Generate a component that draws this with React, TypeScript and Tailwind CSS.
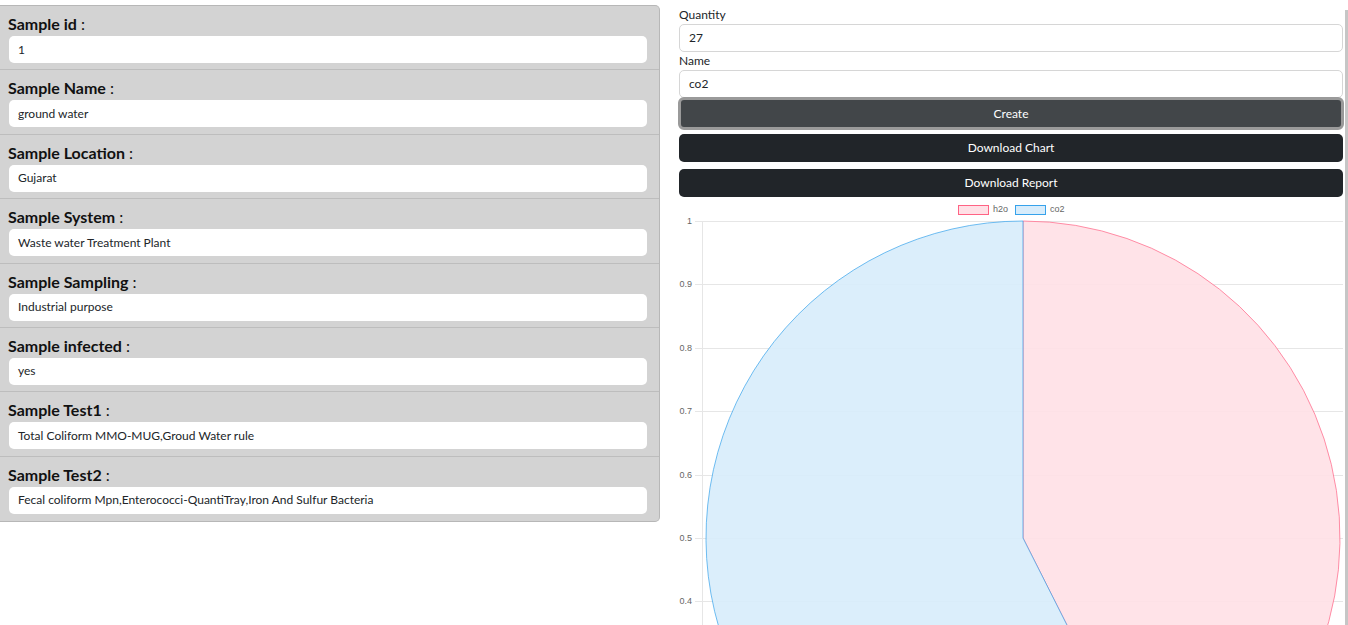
import React from "react";

const fields = [
  { label: "Sample id", value: "1" },
  { label: "Sample Name", value: "ground water" },
  { label: "Sample Location", value: "Gujarat" },
  { label: "Sample System", value: "Waste water Treatment Plant" },
  { label: "Sample Sampling", value: "Industrial purpose" },
  { label: "Sample infected", value: "yes" },
  { label: "Sample Test1", value: "Total Coliform MMO-MUG,Groud Water rule" },
  {
    label: "Sample Test2",
    value: "Fecal coliform Mpn,Enterococci-QuantiTray,Iron And Sulfur Bacteria",
  },
];

const data = [
  { name: "h2o", value: 20, fill: "#ffe0e6", stroke: "#ff6384" },
  { name: "co2", value: 27, fill: "#d7ecfb", stroke: "#36a2eb" },
];

function PieChart() {
  const cx = 344;
  const cy = 338;
  const r = 317;
  const total = data.reduce((s, d) => s + d.value, 0);
  const top = 21;
  const step = 63.4;
  // only the ticks that fit in the visible part of the chart
  const ticks = ["1", "0.9", "0.8", "0.7", "0.6", "0.5", "0.4"];

  let start = -Math.PI / 2;
  const slices = data.map((d) => {
    const sweep = (d.value / total) * Math.PI * 2;
    const end = start + sweep;
    const x1 = cx + r * Math.cos(start);
    const y1 = cy + r * Math.sin(start);
    const x2 = cx + r * Math.cos(end);
    const y2 = cy + r * Math.sin(end);
    const large = sweep > Math.PI ? 1 : 0;
    const path = `M${cx},${cy} L${x1},${y1} A${r},${r} 0 ${large} 1 ${x2},${y2} Z`;
    start = end;
    return { ...d, path };
  });

  return (
    <svg width="664" height="440" className="block" style={{ fontFamily: "'Liberation Sans', Arial, sans-serif" }}>
      {/* legend */}
      <rect x="279.5" y="5.5" width="30" height="9" fill="#ffe0e6" stroke="#ff6384" strokeWidth="1" />
      <text x="314" y="10" fontSize="9" fill="#666" dominantBaseline="middle">h2o</text>
      <rect x="336.5" y="5.5" width="30" height="9" fill="#d7ecfb" stroke="#36a2eb" strokeWidth="1" />
      <text x="371" y="10" fontSize="9" fill="#666" dominantBaseline="middle">co2</text>

      {/* grid */}
      {ticks.map((t, i) => {
        const y = Math.round(top + i * step) + 0.5;
        return (
          <g key={t}>
            <line x1="16" x2="664" y1={y} y2={y} stroke="#e6e6e6" strokeWidth="1" />
            <text x="13" y={y} fontSize="9" fill="#666" textAnchor="end" dominantBaseline="middle">
              {t}
            </text>
          </g>
        );
      })}
      <line x1="23.5" x2="23.5" y1={top} y2="440" stroke="#e6e6e6" strokeWidth="1" />

      {/* slices */}
      {slices.map((s) => (
        <path key={s.name} d={s.path} fill={s.fill} fillOpacity="0.9" stroke={s.stroke} strokeOpacity="0.7" strokeWidth="1" />
      ))}
    </svg>
  );
}

export default function App() {
  return (
    <div
      className="flex h-screen w-full items-start overflow-hidden bg-white text-[#212529]"
      style={{ fontFamily: "Lato, 'Noto Sans', sans-serif" }}
    >
      {/* left panel */}
      <div className="pt-[5px] w-[660px] shrink-0">
        <div className="w-[660px] rounded-r-[5px] border border-l-0 border-[#b7b7b7] bg-[#d3d3d3]">
          {fields.map((f, i) => (
            <div
              key={f.label}
              className={`h-[64.4px] pt-[7px] ${i < fields.length - 1 ? "border-b border-[#bdbdbd]" : ""}`}
            >
              <div className="h-[23px] pl-2 text-[16px] leading-[22px] text-[#111]">
                <span className="font-bold">{f.label}</span> :
              </div>
              <div className="ml-[9px] flex h-[27px] w-[638px] items-center rounded-[5px] bg-white pl-[9px] text-[12px]">
                {f.value}
              </div>
            </div>
          ))}
        </div>
      </div>

      {/* right column */}
      <div className="ml-[19px] flex w-[664px] shrink-0 flex-col pt-[6px]">
        <div className="h-[18px] shrink-0 text-[12px] leading-[18px]">Quantity</div>
        <div className="flex h-[28px] shrink-0 items-center rounded-[5px] border border-[#d6d6d6] bg-white pl-[9px] text-[12px]">
          27
        </div>
        <div className="h-[18px] shrink-0 text-[12px] leading-[18px]">Name</div>
        <div className="flex h-[28px] shrink-0 items-center rounded-[5px] border border-[#d6d6d6] bg-white pl-[9px] text-[12px]">
          co2
        </div>
        <button className="-mx-px mt-[-1px] flex h-[33px] shrink-0 items-center justify-center rounded-[6px] border-[3px] border-[#9a9a9a] bg-[#424649] text-[12px] text-white">
          Create
        </button>
        <button className="mt-[4px] flex h-[28px] shrink-0 items-center justify-center rounded-[5px] bg-[#212529] text-[12px] text-white">
          Download Chart
        </button>
        <button className="mt-[7px] flex h-[28px] shrink-0 items-center justify-center rounded-[5px] bg-[#212529] text-[12px] text-white">
          Download Report
        </button>
        <div className="mt-[3px] shrink-0">
          <PieChart />
        </div>
      </div>

      {/* scrollbar */}
      <div className="ml-[2px] mt-[10px] h-full w-[3px] bg-[#c6c6c6]" />
    </div>
  );
}
